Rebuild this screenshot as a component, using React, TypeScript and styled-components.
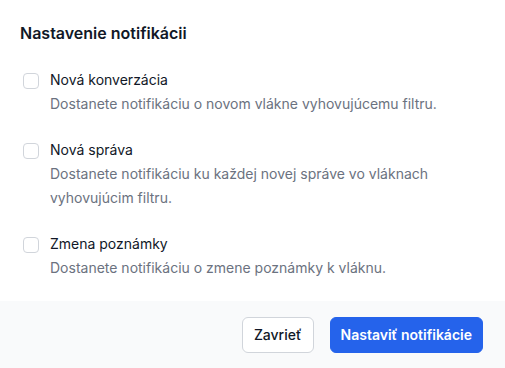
import React from "react";
import styled, { createGlobalStyle } from "styled-components";

const Global = createGlobalStyle`
  html, body { margin: 0; padding: 0; background: #ffffff; }
  body { font-family: Inter, "Noto Sans", sans-serif; -webkit-font-smoothing: antialiased; }
  * { box-sizing: border-box; }
`;

const Dialog = styled.div`
  width: 505px;
  height: 368px;
  display: flex;
  flex-direction: column;
  background: #ffffff;
`;

const Body = styled.div`
  flex: 1;
  padding: 21px 20px 0 20px;
  display: flex;
  flex-direction: column;
`;

const Title = styled.h3`
  margin: 0;
  font-size: 16px;
  line-height: 24px;
  font-weight: 600;
  color: #111827;
`;

const List = styled.div`
  margin-top: 23px;
  display: flex;
  flex-direction: column;
  gap: 22px;
`;

const Item = styled.label`
  display: flex;
  align-items: flex-start;
  gap: 11px;
  cursor: pointer;
`;

const Box = styled.input.attrs({ type: "checkbox" })`
  appearance: none;
  -webkit-appearance: none;
  margin: 5px 0 0 3px;
  width: 16px;
  height: 16px;
  flex: none;
  border: 1px solid #d1d5db;
  border-radius: 4px;
  background: #ffffff;
`;

const Text = styled.div`
  display: flex;
  flex-direction: column;
`;

const Label = styled.span`
  font-size: 14px;
  line-height: 24px;
  font-weight: 400;
  color: #111827;
`;

const Desc = styled.span`
  font-size: 14px;
  line-height: 24px;
  color: #6b7280;
`;

const Footer = styled.div`
  background: #f9fafb;
  padding: 16px 22px 15px 22px;
  display: flex;
  justify-content: flex-end;
  gap: 16px;
`;

const Button = styled.button<{ $primary?: boolean }>`
  height: 36px;
  padding: 0 ${(p) => (p.$primary ? "10px" : "11px")};
  border-radius: 6px;
  font-family: Inter, "Noto Sans", sans-serif;
  font-size: 14px;
  font-weight: ${(p) => (p.$primary ? 600 : 500)};
  line-height: 20px;
  cursor: pointer;
  border: 1px solid ${(p) => (p.$primary ? "#2563eb" : "#d1d5db")};
  background: ${(p) => (p.$primary ? "#2563eb" : "#ffffff")};
  color: ${(p) => (p.$primary ? "#ffffff" : "#111827")};
`;

const items = [
  {
    label: "Nová konverzácia",
    desc: "Dostanete notifikáciu o novom vlákne vyhovujúcemu filtru.",
  },
  {
    label: "Nová správa",
    desc: "Dostanete notifikáciu ku každej novej správe vo vláknach vyhovujúcim filtru.",
  },
  {
    label: "Zmena poznámky",
    desc: "Dostanete notifikáciu o zmene poznámky k vláknu.",
  },
];

export default function App() {
  return (
    <>
      <Global />
      <Dialog>
        <Body>
          <Title>Nastavenie notifikácii</Title>
          <List>
            {items.map((it) => (
              <Item key={it.label}>
                <Box />
                <Text>
                  <Label>{it.label}</Label>
                  <Desc>{it.desc}</Desc>
                </Text>
              </Item>
            ))}
          </List>
        </Body>
        <Footer>
          <Button>Zavrieť</Button>
          <Button $primary>Nastaviť notifikácie</Button>
        </Footer>
      </Dialog>
    </>
  );
}
